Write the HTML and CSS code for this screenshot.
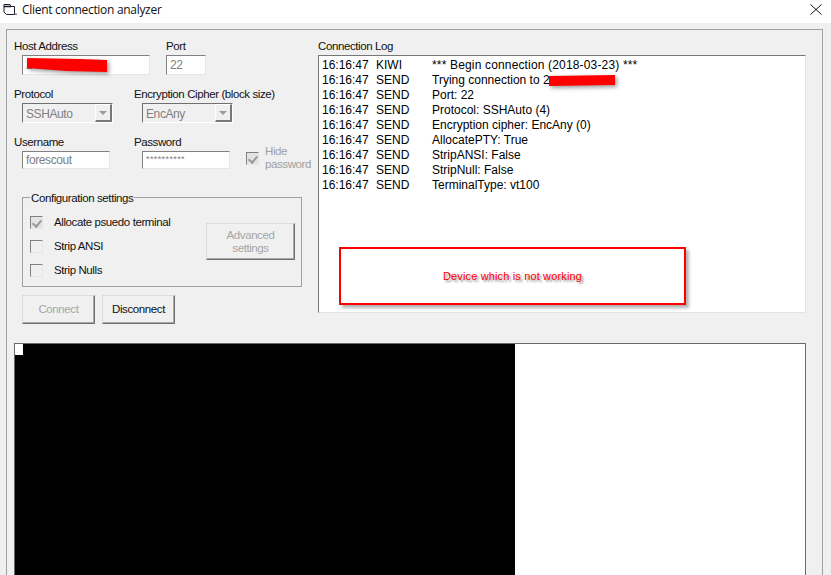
FILE: index.html
```html
<!DOCTYPE html>
<html lang="en">
<head>
<meta charset="utf-8">
<title>Client connection analyzer</title>
<link rel="stylesheet" href="styles.css">
</head>
<body>
<header class="titlebar">
  <svg class="app-icon" width="14" height="12" viewBox="0 0 14 12"><path d="M1 .5h6l1 2h3.500v8h-8l-2.500-2.500z" fill="none" stroke="#1a1a2a" stroke-width="1"/><path d="M1 2.500h7" stroke="#1a1a2a" stroke-width="1.500"/><path d="M12 9.500h2v1.500h-2z" fill="#888"/></svg>
  <span class="title">Client connection analyzer</span>
  <svg class="close" width="12" height="11" viewBox="0 0 12 11"><path d="M.5 .5l11 10M11.500 .5l-11 10" stroke="#111" stroke-width="1"/></svg>
</header>
<main class="client">
  <div class="frame">
    <div class="top">
      <section class="form">
        <div class="row row-host">
          <div class="field f-host"><label>Host Address</label><div class="input">2</div></div>
          <div class="field f-port"><label>Port</label><div class="input">22</div></div>
        </div>
        <div class="row row-proto">
          <div class="field f-proto"><label>Protocol</label><div class="select"><span>SSHAuto</span><i class="arrow"></i></div></div>
          <div class="field f-enc"><label>Encryption Cipher (block size)</label><div class="select"><span>EncAny</span><i class="arrow"></i></div></div>
        </div>
        <div class="row row-user">
          <div class="field f-user"><label>Username</label><div class="input short">forescout</div></div>
          <div class="field f-pass"><label>Password</label><div class="input short pass">**********</div></div>
          <div class="hide"><span class="check on dis"></span><span class="hide-label">Hide<br>password</span></div>
        </div>
        <fieldset class="group">
          <legend>Configuration settings</legend>
          <div class="opts">
            <div class="opt"><span class="check on dis"></span><span>Allocate psuedo terminal</span></div>
            <div class="opt"><span class="check"></span><span>Strip ANSI</span></div>
            <div class="opt"><span class="check"></span><span>Strip Nulls</span></div>
          </div>
          <button class="btn adv" disabled>Advanced<br>settings</button>
        </fieldset>
        <div class="actions">
          <button class="btn act" disabled>Connect</button>
          <button class="btn act">Disconnect</button>
        </div>
      </section>
      <section class="logwrap">
        <label>Connection Log</label>
        <div class="log">
          <div class="line first"><span>16:16:47</span><span>KIWI</span><span class="begin">*** Begin connection (2018-03-23) ***</span></div>
          <div class="line"><span>16:16:47</span><span>SEND</span><span>Trying connection to 2</span></div>
          <div class="line"><span>16:16:47</span><span>SEND</span><span>Port: 22</span></div>
          <div class="line"><span>16:16:47</span><span>SEND</span><span>Protocol: SSHAuto (4)</span></div>
          <div class="line"><span>16:16:47</span><span>SEND</span><span>Encryption cipher: EncAny (0)</span></div>
          <div class="line"><span>16:16:47</span><span>SEND</span><span>AllocatePTY: True</span></div>
          <div class="line"><span>16:16:47</span><span>SEND</span><span>StripANSI: False</span></div>
          <div class="line"><span>16:16:47</span><span>SEND</span><span>StripNull: False</span></div>
          <div class="line"><span>16:16:47</span><span>SEND</span><span>TerminalType: vt100</span></div>
          <div class="note"><span>Device which is not working</span></div>
        </div>
      </section>
    </div>
    <div class="terminal"><i class="cursor"></i></div>
  </div>
  <svg class="scribble host-scribble" width="86" height="18" viewBox="0 0 86 18"><path d="M1 0L54 1L81 2L81 14L40 13L1 10z" fill="#f00"/></svg>
  <svg class="scribble log-scribble" width="72" height="14" viewBox="0 0 72 14"><path d="M1 1L67 0L67 10L1 11z" fill="#f00"/></svg>
</main>
</body>
</html>
```
FILE: styles.css
```css
* { box-sizing: border-box; }
html, body { margin: 0; height: 100%; overflow: hidden; }
body { background: #f0f0f0; color: #111; font: 11.5px/15px "Liberation Sans", Arial, sans-serif; letter-spacing: -.4px; }
.titlebar { height: 23px; background: #fff; display: flex; align-items: center; padding: 0 9px 4px 3px; }
.app-icon { flex: none; }
.title { margin-left: 5px; font: 12px/16px "Open Sans", sans-serif; letter-spacing: -.3px; color: #111; flex: 1; }
.client { position: relative; height: 552px; padding: 6px 8px 0 6px; }
.frame { height: 100%; border: 1px solid #a0a0a0; border-bottom: 0; padding: 8px 15px 0 7px; display: flex; flex-direction: column; }
.top { display: flex; height: 275px; flex: none; }
.form { width: 304px; flex: none; }
.row { display: flex; }
label { display: block; }
.row-host label, .logwrap label { padding-top: 1px; }
.input, .select { margin-left: 8px; border: 1px solid; color: #808080; padding: 0 0 0 3px; }
.input { background: #fff; border-color: #808080 #e6e6e6 #e6e6e6 #808080; height: 20px; line-height: 18px; margin-top: 1px; font-size: 12px; }
.f-host { width: 152px; }
.f-host .input { width: 128px; }
.f-port .input { width: 40px; margin-left: 0; }
.row-proto { margin-top: 12px; }
.select { height: 20px; width: 91px; background: #f0f0f0; border-color: #707070 #fff #fff #707070; margin-top: 1px; display: flex; align-items: center; justify-content: space-between; line-height: 18px; font-size: 12px; }
.select span { padding-top: 1px; }
.arrow { width: 17px; height: 18px; background: #f0f0f0; border: solid; border-width: 1px 2px 2px 1px; border-color: #fff #777 #777 #fff; position: relative; }
.arrow::after { content: ""; position: absolute; left: 3px; top: 6px; border: 4px solid transparent; border-top: 4px solid #999; border-bottom: 0; }
.f-proto { width: 120px; }
.f-enc { width: 112px; }
.f-enc label { white-space: nowrap; }
.row-user { margin-top: 12px; }
.f-user { width: 120px; }
.f-user .short { width: 88px; }
.input.short { height: 18px; line-height: 17px; margin-top: 1px; }
.f-pass { width: 112px; }
.f-pass .short { width: 88px; }
.input.pass { font-size: 9px; letter-spacing: .4px; line-height: 15px; }
.hide { display: flex; padding-top: 17px; }
.hide-label { margin-left: 6px; margin-top: -7px; color: #a0a0a0; line-height: 13px; }
.check { display: block; flex: none; width: 13px; height: 13px; background: #f0f0f0; border: 1px solid; border-color: #808080 #e6e6e6 #e6e6e6 #808080; position: relative; }
.check.dis { background: #e4e4e4; }
.check.on::after { content: ""; position: absolute; left: 3px; top: 1px; width: 4px; height: 7px; border: solid #9a9a9a; border-width: 0 2px 2px 0; transform: rotate(40deg); }
.group { margin: 26px 0 0 8px; padding: 0; width: 280px; height: 90px; border: 1px solid #a0a0a0; position: relative; display: flex; }
.group legend { margin-left: 7px; padding: 0 1px; line-height: 15px; position: absolute; top: -7px; background: #f0f0f0; }
.opts { padding-top: 18px; margin-left: 7px; line-height: 13px; }
.opt { display: flex; height: 24px; gap: 11px; }
.btn { font: 11.5px/13px "Liberation Sans", Arial, sans-serif; letter-spacing: -.4px; color: #111; background: #f0f0f0; border: 1px solid; border-color: #dcdcdc #6e6e6e #6e6e6e #dcdcdc; padding: 0; box-shadow: inset -1px -1px 0 #a8a8a8; }
.btn:disabled { color: #a6a6a6; }
.adv { position: absolute; left: 183px; top: 25px; width: 89px; height: 37px; }
.actions { display: flex; gap: 7px; margin: 8px 0 0 8px; }
.act { width: 73px; height: 29px; }
.logwrap { flex: 1; }
.log { position: relative; margin-top: 1px; width: 488px; height: 258px; background: #fff; border: 1px solid; border-color: #777 #e3e3e3 #e3e3e3 #777; padding: 2px 0 0 3px; color: #000; font-size: 12px; letter-spacing: 0; }
.line { display: grid; grid-template-columns: 54px 56px 1fr; height: 15px; line-height: 15px; }
.begin { letter-spacing: .16px; }
.note { position: absolute; left: 20px; top: 191px; width: 347px; height: 58px; border: 2px solid #f00; box-shadow: 3px 3px 3px rgba(0,0,0,.3); display: flex; align-items: center; justify-content: center; font-size: 11px; letter-spacing: .15px; color: #f00; text-shadow: 2px 2px 2px rgba(0,0,0,.45); padding-top: 1px; }
.terminal { margin-top: 30px; flex: 1; min-height: 0; width: 792px; background: linear-gradient(90deg, #000 500px, #fff 500px); border: 1px solid #6a6a6a; border-bottom: 0; position: relative; }
.cursor { position: absolute; left: 0; top: 0; width: 8px; height: 11px; background: #fff; }
.scribble { position: absolute; filter: drop-shadow(2px 2px 2px rgba(0,0,0,.4)); }
.host-scribble { left: 26px; top: 35px; }
.log-scribble { left: 548px; top: 52px; }
```
